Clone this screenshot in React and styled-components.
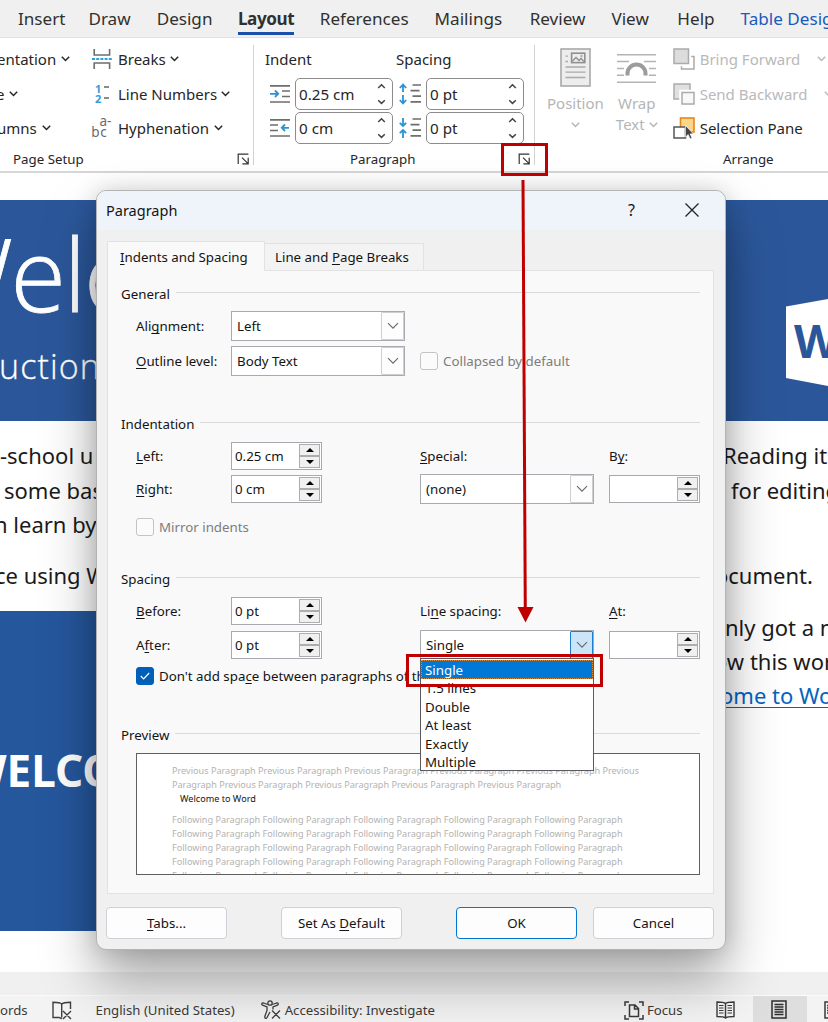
import React from "react";
import styled, { createGlobalStyle } from "styled-components";

const Global = createGlobalStyle`
  * { box-sizing: border-box; }
  body { margin: 0; overflow: hidden; }
  u { text-decoration: underline; text-decoration-thickness: 1px; text-underline-offset: 2px; text-decoration-skip-ink: none; }
`;

const Window = styled.div`
  position: relative;
  display: flex;
  flex-direction: column;
  width: 828px;
  height: 1022px;
  overflow: hidden;
  background: #fff;
  color: #262626;
  font-family: "Noto Sans", "Open Sans", sans-serif;
  font-size: 13.3px;
  white-space: nowrap;
`;

/* ---------- ribbon ---------- */
const TabBar = styled.nav`
  display: flex;
  height: 38px;
  flex: none;
  background: #f0f0f0;
  border-bottom: 1px solid #e2e2e2;
`;
const RibbonTab = styled.span`
  flex: none;
  height: 35px;
  margin-left: ${(p) => p.$gap}px;
  line-height: 37px;
  font-size: 17.1px;
  color: ${(p) => (p.$contextual ? "#185abd" : "#303030")};
  font-weight: ${(p) => (p.$active ? 700 : 400)};
  letter-spacing: ${(p) => (p.$active ? "-0.4px" : "0")};
  border-bottom: ${(p) => (p.$active ? "3px solid #1a50ab" : "none")};
`;
const Ribbon = styled.section`
  display: flex;
  flex: none;
  height: 135px;
  padding-top: 4px;
  background: #fff;
  border-bottom: 2px solid #d6d6d6;
`;
const Group = styled.div`
  position: relative;
  display: flex;
  flex-direction: column;
  flex: none;
  width: ${(p) => p.$w}px;
  &::after {
    content: "";
    position: absolute;
    right: 0;
    top: 3px;
    width: 1px;
    height: 120px;
    background: ${(p) => (p.$last ? "transparent" : "#d2d2d2")};
  }
`;
const GroupBody = styled.div`
  display: flex;
  height: 104px;
`;
const GroupFooter = styled.div`
  display: flex;
  align-items: center;
  justify-content: space-between;
  height: 25px;
  padding: 0 4px 0 ${(p) => p.$pad}px;
`;
const Column = styled.div`
  flex: none;
  width: ${(p) => p.$w}px;
  margin-left: ${(p) => p.$ml || 0}px;
`;
const Command = styled.div`
  display: flex;
  align-items: center;
  height: 34.6px;
  font-size: 15px;
  margin-left: ${(p) => p.$shift || 0}px;
  color: ${(p) => (p.$disabled ? "#b9b9b9" : "#262626")};
  & > svg:first-child { flex: none; margin-right: 5px; }
`;
const Arrow = styled.svg`
  flex: none;
  margin-left: ${(p) => p.$gap ?? 5}px;
`;
const Caret = ({ gap }) => (
  <Arrow $gap={gap} width="9" height="6" viewBox="0 0 9 6" fill="none" stroke="currentColor" strokeWidth="1.5">
    <path d="M.8 .8 4.5 4.5 8.2 .8" />
  </Arrow>
);
const FieldRow = styled.div`
  display: flex;
  align-items: center;
  height: 34.6px;
  font-size: 15px;
  & > svg { flex: none; }
`;
const FieldHead = styled.span`
  width: ${(p) => p.$w}px;
`;
const RibbonInput = styled.div`
  display: flex;
  align-items: center;
  justify-content: space-between;
  width: 98px;
  height: 32px;
  padding: 0 6px 0 3px;
  margin: 0 ${(p) => p.$mr || 0}px 0 5px;
  border: 1px solid #8c8c8c;
  border-radius: 5px;
  background: #fff;
  font-size: 15.2px;
`;
const UpDown = () => (
  <svg width="9" height="22" viewBox="0 0 9 22" fill="none" stroke="#444" strokeWidth="1.5">
    <path d="M1.2 5 4.5 1.8 7.8 5M1.2 17.2 4.5 20.4 7.8 17.2" />
  </svg>
);
const Launcher = () => (
  <svg width="13" height="12" viewBox="0 0 13 12" fill="none" stroke="#333" strokeWidth="1.2">
    <path d="M1.2 11V1.2H11.4M5 4.6 10.6 10.2M11.2 4.8V10.8H5.4" />
  </svg>
);
const BigCommand = styled.div`
  display: flex;
  flex-direction: column;
  align-items: center;
  width: ${(p) => p.$w}px;
  margin-left: ${(p) => p.$ml}px;
  padding-top: 6px;
  font-size: 15px;
  line-height: 21px;
  color: #b5b5b5;
  & > svg:first-child { margin-bottom: 6px; flex: none; }
`;
const BigLine = styled.div`
  display: flex;
  align-items: center;
  height: 21px;
`;

const BreaksIcon = () => (
  <svg width="22" height="22" viewBox="0 0 22 22" fill="none" stroke="#6e6e6e" strokeWidth="1.6">
    <path d="M3.2 1V7H18.6V1M3.2 21V15H18.6V21" />
    <path d="M1 11H21" stroke="#2e9fe0" strokeWidth="1.8" strokeDasharray="3 1.2" />
  </svg>
);
const NumberMark = styled.text`
  font: 700 11px "Noto Sans", sans-serif;
  fill: #3a9bdc;
`;
const HyphenMark = styled.text`
  font: 13.5px "Noto Sans", sans-serif;
  fill: #6a6a6a;
`;
const LineNumbersIcon = () => (
  <svg width="22" height="22" viewBox="0 0 22 22">
    <NumberMark x="4" y="9.5">1</NumberMark>
    <NumberMark x="4" y="20">2</NumberMark>
    <path d="M13 4H18M13 15H18" stroke="#666" strokeWidth="1.4" />
  </svg>
);
const HyphenIcon = () => (
  <svg width="22" height="24" viewBox="0 0 22 24">
    <HyphenMark x="8.5" y="10">a-</HyphenMark>
    <HyphenMark x="0.2" y="21" letterSpacing=".8">bc</HyphenMark>
  </svg>
);
const IndentIcon = ({ right }) => (
  <svg width="20" height="20" viewBox="0 0 20 20" fill="none" stroke="#6e6e6e" strokeWidth="1.7">
    <path d={right ? "M0 1.8H20M0 7H8M0 12.5H8M0 18H20" : "M0 1.8H20M12 7H20M12 12.5H20M0 18H20"} />
    <path d={right ? "M19 9.8H12M15 6.5 11.8 9.8 15 13" : "M0 9.8H8M5 6.5 8.2 9.8 5 13"} stroke="#2a93d4" strokeWidth="1.8" />
  </svg>
);
const SpacingIcon = ({ after }) => (
  <svg width="22" height="22" viewBox="0 0 22 22" fill="none" stroke="#6e6e6e" strokeWidth="1.7">
    <path d="M13.5 2H22M11.5 7.6H20.5M13.5 13.2H22M11.5 18.8H22" />
    <path
      d={after ? "M4 1V9M.8 5.8 4 9 7.2 5.8M4 21V13M.8 16.2 4 13 7.2 16.2" : "M4 9V1.6M.8 5 4 1.6 7.2 5M4 12V20.4M.8 17 4 20.4 7.2 17"}
      stroke="#2a93d4"
      strokeWidth="1.8"
    />
  </svg>
);
const PositionIcon = () => (
  <svg width="31" height="39" viewBox="0 0 31 39" fill="#ededed" stroke="#a9a9a9" strokeWidth="1.6">
    <rect x="1" y="1" width="29" height="37" />
    <path d="M5.5 8.2H8M5.5 13.5H8M5.5 19H25.5M5.5 24.2H25.5M5.5 29.5H25.5" strokeWidth="1.3" />
    <rect x="11.6" y="5.2" width="13.2" height="9.4" stroke="#8f8f8f" />
    <path d="M12.5 13 16 9.5 19 12.5 21 10.5 24 13.5" fill="none" stroke="#8f8f8f" strokeWidth="1.3" />
    <circle cx="21.5" cy="8" r=".8" stroke="#8f8f8f" strokeWidth=".8" />
  </svg>
);
const WrapIcon = () => (
  <svg width="39" height="39" viewBox="0 -5 39 39" fill="none" stroke="#b4b4b4" strokeWidth="1.4">
    <path d="M0 1.7H39M0 8.5H12M27 8.5H39M0 15.5H7M32 15.5H39M0 22.3H7M32 22.3H39M0 29.2H39" />
    <path d="M10.5 22.5V20.5a9 9 0 0 1 18 0V22.5" stroke="#9c9c9c" strokeWidth="4" />
  </svg>
);
const ForwardIcon = () => (
  <svg width="22" height="22" viewBox="0 0 22 22" stroke="#ababab" strokeWidth="1.5">
    <path d="M8.5 21H21V8.5H8.5Z" fill="#fff" />
    <rect x="6.5" y="6.5" width="11" height="11" fill="#fff" stroke="#fff" />
    <rect x="1" y="1" width="14.5" height="14.5" fill="#dcdcdc" />
  </svg>
);
const BackwardIcon = () => (
  <svg width="22" height="22" viewBox="0 0 22 22" stroke="#ababab" strokeWidth="1.5">
    <rect x="1" y="1" width="16" height="15" fill="#e0e0e0" />
    <rect x="7" y="7.5" width="15" height="15" fill="#fff" stroke="#fff" />
    <rect x="9" y="9.5" width="12" height="11.5" fill="#f8f8f8" />
  </svg>
);
const SelectionIcon = () => (
  <svg width="22" height="23" viewBox="0 0 22 23">
    <rect x="7.5" y="1" width="13.5" height="14" fill="#fbd58a" stroke="#e8861e" strokeWidth="1.6" />
    <rect x="1" y="10" width="11.5" height="11" fill="#fff" stroke="#555" strokeWidth="1.5" />
    <path d="M12.5 8.5V20L15.2 17.6 17 22 19 21 17.2 16.9H20.5Z" fill="#444" stroke="#fff" strokeWidth=".7" />
  </svg>
);

/* ---------- document ---------- */
const Doc = styled.main`
  flex: none;
  height: 799px;
  padding-top: 27px;
  overflow: hidden;
  color: #1b1b1b;
`;
const Banner = styled.header`
  display: flex;
  justify-content: space-between;
  height: 221px;
  background: #2b579a;
  color: #fff;
  overflow: hidden;
`;
const BannerTitle = styled.div`
  height: 138px;
  margin-left: -77px;
  font: 300 101px/146px "Open Sans", "Noto Sans", sans-serif;
  letter-spacing: -2.5px;
  -webkit-text-stroke: 0.8px #fff;
`;
const BannerSub = styled.div`
  margin-left: -1px;
  font: 300 34px/57px "Open Sans", "Noto Sans", sans-serif;
  letter-spacing: 1.1px;
  -webkit-text-stroke: 0.3px #fff;
`;
const WordMark = styled.svg`
  flex: none;
  margin-top: 98px;
`;
const WordLetter = styled.text`
  font: 700 46px "Noto Sans", sans-serif;
  fill: #2b579a;
`;
const Prose = styled.div`
  height: 190px;
  padding-top: 17px;
  font-size: 22px;
`;
const ProseLine = styled.div`
  display: flex;
  height: 34.5px;
  line-height: 34.5px;
  margin-top: ${(p) => (p.$para ? 16 : 0)}px;
`;
const Chunk = styled.span`
  flex: none;
  width: ${(p) => p.$w}px;
  overflow: hidden;
  text-indent: ${(p) => p.$x || 0}px;
`;
const Split = styled.div`
  display: flex;
  height: 320px;
`;
const VideoPanel = styled.div`
  flex: none;
  width: 600px;
  padding-top: 128px;
  background: #25579d;
  color: #fff;
  overflow: hidden;
  font-size: 44px;
  font-weight: 700;
  line-height: 63px;
  text-indent: -36px;
`;
const SideText = styled.div`
  flex: none;
  width: 228px;
  padding-left: 125px;
  font-size: 22px;
  line-height: 34.2px;
`;
const SideLine = styled.div`
  height: 34.2px;
  margin-top: ${(p) => p.$mt || 0}px;
  text-indent: ${(p) => p.$x}px;
`;
const Link = styled.span`
  color: #0563c1;
  text-decoration: underline;
  text-decoration-thickness: 1px;
  text-underline-offset: 3px;
`;
const ScrollTrack = styled.div`
  flex: none;
  height: 24px;
  background: #f0f0f0;
  border-bottom: 1px solid #fbfbfb;
`;
const StatusBar = styled.footer`
  display: flex;
  align-items: center;
  flex: none;
  height: 26px;
  padding-top: 2px;
  background: #f3f3f3;
  color: #3a3a3a;
  font-size: 13.2px;
  & svg { flex: none; }
`;
const StatusItem = styled.span`
  display: flex;
  align-items: center;
  flex: none;
  gap: ${(p) => p.$gap || 0}px;
  margin-left: ${(p) => p.$ml || 0}px;
`;
const ViewButton = styled.span`
  display: flex;
  align-items: center;
  justify-content: center;
  flex: none;
  width: 54px;
  height: 26px;
  margin: -2px 0 0 18px;
  padding-right: 2px;
  background: #dedede;
`;

/* ---------- dialog ---------- */
const Dialog = styled.section`
  position: absolute;
  z-index: 1;
  left: 96px;
  top: 190px;
  width: 630px;
  height: 760px;
  border: 1px solid #b4b4b4;
  border-radius: 10px;
  background: #f0f0f0;
  color: #141414;
  box-shadow: 0 30px 54px rgba(0, 0, 0, 0.34), 0 0 22px rgba(0, 0, 0, 0.15);
`;
const TitleBar = styled.div`
  display: flex;
  align-items: center;
  height: 39px;
  padding: 0 26px 1px 9px;
  border-radius: 9px 9px 0 0;
  background: #eff4fa;
  font-size: 14.5px;
`;
const HelpMark = styled.span`
  margin: 0 50px 0 auto;
  font-size: 16px;
`;
const TabStrip = styled.div`
  display: flex;
  align-items: flex-end;
  height: 40px;
  padding: 11px 0 0 10px;
`;
const DialogTab = styled.div`
  width: ${(p) => (p.$active ? 158 : 159)}px;
  height: ${(p) => (p.$active ? 30 : 27)}px;
  margin-bottom: ${(p) => (p.$active ? -1 : 0)}px;
  padding-left: ${(p) => (p.$active ? 12 : 10)}px;
  line-height: ${(p) => (p.$active ? 30 : 27)}px;
  border: 1px solid #e2e2e2;
  border-bottom: none;
  border-left-width: ${(p) => (p.$active ? 1 : 0)}px;
  background: ${(p) => (p.$active ? "#f9f9f9" : "#f3f3f3")};
`;
const Panel = styled.div`
  width: 607px;
  height: 624px;
  margin-left: 10px;
  padding: 13px 13px 0 13px;
  border: 1px solid #e2e2e2;
  background: #f9f9f9;
`;
const Heading = styled.div`
  display: flex;
  align-items: center;
  gap: 6px;
  height: 20px;
  margin-top: ${(p) => p.$mt || 0}px;
  &::after {
    content: "";
    flex: 1;
    height: 1px;
    margin-top: -3px;
    background: #dadada;
  }
`;
const FormRow = styled.div`
  position: relative;
  display: grid;
  grid-template-columns: 95px 189px 189px 91px;
  align-items: center;
  height: ${(p) => p.$h}px;
  margin: ${(p) => p.$mt || 0}px 0 0 15px;
`;
const Combo = styled.div`
  display: flex;
  align-items: center;
  justify-content: space-between;
  width: 174px;
  height: 30px;
  padding-left: 5px;
  border: 1px solid #a9a9b0;
  background: #fff;
`;
const ComboButton = styled.span`
  display: flex;
  align-items: center;
  justify-content: center;
  width: 23px;
  height: 28px;
  border: 1px solid ${(p) => (p.$open ? "#1a7fd0" : "#cfcfcf")};
  border-radius: 1px;
  background: ${(p) => (p.$open ? "#cce4f7" : "#fdfdfd")};
`;
const SpinBox = styled.div`
  display: flex;
  justify-content: space-between;
  width: 91px;
  height: 28px;
  padding: 1px 1px 1px 3px;
  border: 1px solid #a9a9b0;
  background: #fff;
  line-height: 24px;
`;
const SpinButtons = styled.span`
  display: flex;
  flex-direction: column;
  width: 21px;
`;
const SpinButton = styled.span`
  display: flex;
  align-items: center;
  justify-content: center;
  flex: 1;
  border: 1px solid #adadad;
  background: #f0f0f0;
`;
const CheckRow = styled.div`
  display: flex;
  align-items: center;
  gap: 5px;
  height: 20px;
  margin: ${(p) => p.$mt || 0}px 0 0 ${(p) => p.$ml ?? 15}px;
  color: ${(p) => (p.$disabled ? "#7d7d7d" : "inherit")};
`;
const CheckBox = styled.span`
  display: flex;
  align-items: center;
  justify-content: center;
  flex: none;
  width: 18px;
  height: 18px;
  border: 1px solid ${(p) => (p.$on ? "#005fb8" : "#c4c4c4")};
  border-radius: 3px;
  background: ${(p) => (p.$on ? "#005fb8" : "#fbfbfb")};
`;
const ListBox = styled.ul`
  position: absolute;
  left: 284px;
  top: 28px;
  z-index: 2;
  width: 174px;
  height: 113px;
  margin: 0;
  padding: 1px 0 0;
  list-style: none;
  border: 1px solid #5a5a60;
  background: #fff;
`;
const Option = styled.li`
  height: ${(p) => (p.$on ? 19.4 : 18.4)}px;
  padding-left: 4px;
  line-height: ${(p) => (p.$on ? 20 : 18.4)}px;
  color: ${(p) => (p.$on ? "#fff" : "#141414")};
  background: ${(p) => (p.$on ? "#0078d7" : "transparent")};
  outline: ${(p) => (p.$on ? "1px dotted #d98a3a" : "none")};
  outline-offset: -1px;
`;
const Preview = styled.div`
  width: 564px;
  height: 122px;
  margin: 8px 0 0 15px;
  padding: 10px 0 0 35px;
  overflow: hidden;
  border: 1px solid #5f5f5f;
  background: #fff;
  color: #b2b2b2;
  font-size: 9.12px;
  line-height: 14.1px;
`;
const PreviewSample = styled.div`
  margin: 0 0 6.5px 8px;
  color: #141414;
`;
const Buttons = styled.div`
  display: flex;
  padding: 13px 0 0 9px;
`;
const Button = styled.button`
  width: 121px;
  height: 32px;
  margin: 0 ${(p) => p.$mr || 0}px 0 0;
  padding: 0;
  border: 1px solid ${(p) => (p.$primary ? "#0078d4" : "#cdd0d4")};
  border-radius: 4px;
  background: #fdfdfd;
  color: #141414;
  font: inherit;
`;
const Down = () => (
  <svg width="12" height="8" viewBox="0 0 12 8" fill="none" stroke="#6a6a6a" strokeWidth="1.2">
    <path d="M1 1.2 6 6.2 11 1.2" />
  </svg>
);
const Select = ({ value, open }) => (
  <Combo>
    <span>{value}</span>
    <ComboButton $open={open}><Down /></ComboButton>
  </Combo>
);
const Spin = ({ value }) => (
  <SpinBox>
    <span>{value}</span>
    <SpinButtons>
      <SpinButton><svg width="8" height="4" viewBox="0 0 8 4"><path d="M0 4 4 0 8 4Z" /></svg></SpinButton>
      <SpinButton><svg width="8" height="4" viewBox="0 0 8 4"><path d="M0 0 4 4 8 0Z" /></svg></SpinButton>
    </SpinButtons>
  </SpinBox>
);

/* ---------- callouts ---------- */
const Callout = styled.div`
  position: absolute;
  z-index: 2;
  left: ${(p) => p.$x}px;
  top: ${(p) => p.$y}px;
  width: ${(p) => p.$w}px;
  height: ${(p) => p.$h}px;
  border: 3px solid #c00000;
`;
const CalloutArrow = styled.svg`
  position: absolute;
  z-index: 2;
  left: 515px;
  top: 180px;
`;

const tabs = [
  { name: "Insert", gap: 18 },
  { name: "Draw", gap: 23 },
  { name: "Design", gap: 26 },
  { name: "Layout", gap: 25.5, active: true },
  { name: "References", gap: 25.5 },
  { name: "Mailings", gap: 26 },
  { name: "Review", gap: 27.5 },
  { name: "View", gap: 26 },
  { name: "Help", gap: 28.5 },
  { name: "Table Design", gap: 26, contextual: true },
];
const spacingOptions = ["Single", "1.5 lines", "Double", "At least", "Exactly", "Multiple"];
const repeat = (s, n) => Array(n).fill(s).join(" ");

function ParagraphDialog() {
  return (
    <Dialog>
      <TitleBar>
        Paragraph
        <HelpMark>?</HelpMark>
        <svg width="14" height="14" viewBox="0 0 14 14" stroke="#222" strokeWidth="1.3"><path d="M.5 .5 13.5 13.5M13.5 .5 .5 13.5" /></svg>
      </TitleBar>
      <TabStrip>
        <DialogTab $active><u>I</u>ndents and Spacing</DialogTab>
        <DialogTab>Line and <u>P</u>age Breaks</DialogTab>
      </TabStrip>
      <Panel>
        <Heading>General</Heading>
        <FormRow $h={30} $mt={7}>
          <span>Ali<u>g</u>nment:</span>
          <Select value="Left" />
        </FormRow>
        <FormRow $h={30} $mt={5}>
          <span><u>O</u>utline level:</span>
          <Select value="Body Text" />
          <CheckRow $disabled $ml={0}><CheckBox />Collapsed by default</CheckRow>
        </FormRow>
        <Heading $mt={38}>Indentation</Heading>
        <FormRow $h={28} $mt={8}>
          <span><u>L</u>eft:</span>
          <Spin value="0.25 cm" />
          <span><u>S</u>pecial:</span>
          <span>B<u>y</u>:</span>
        </FormRow>
        <FormRow $h={30} $mt={4}>
          <span><u>R</u>ight:</span>
          <Spin value="0 cm" />
          <Select value="(none)" />
          <Spin />
        </FormRow>
        <CheckRow $disabled $mt={13}><CheckBox />Mirror indents</CheckRow>
        <Heading $mt={32}>Spacing</Heading>
        <FormRow $h={28} $mt={8}>
          <span><u>B</u>efore:</span>
          <Spin value="0 pt" />
          <span>Li<u>n</u>e spacing:</span>
          <span><u>A</u>t:</span>
        </FormRow>
        <FormRow $h={30} $mt={5}>
          <span>A<u>f</u>ter:</span>
          <Spin value="0 pt" />
          <Select value="Single" open />
          <Spin />
          <ListBox>
            {spacingOptions.map((o, i) => <Option key={o} $on={i === 0}>{o}</Option>)}
          </ListBox>
        </FormRow>
        <CheckRow $mt={6}>
          <CheckBox $on>
            <svg width="10" height="8" viewBox="0 0 10 8" fill="none" stroke="#fff" strokeWidth="1.2"><path d="M.8 4 3.6 6.8 9.2 1" /></svg>
          </CheckBox>
          <span>Don't add spa<u>c</u>e between paragraphs of the same style</span>
        </CheckRow>
        <Heading $mt={39}>Preview</Heading>
        <Preview>
          <div>{repeat("Previous Paragraph", 5)} Previous</div>
          <div>Paragraph {repeat("Previous Paragraph", 4)}</div>
          <PreviewSample>Welcome to Word</PreviewSample>
          {[0, 1, 2, 3, 4].map((i) => <div key={i}>{repeat("Following Paragraph", 5)}</div>)}
        </Preview>
      </Panel>
      <Buttons>
        <Button $mr={54}><u>T</u>abs...</Button>
        <Button $mr={54}>Set As <u>D</u>efault</Button>
        <Button $mr={16} $primary>OK</Button>
        <Button>Cancel</Button>
      </Buttons>
    </Dialog>
  );
}

export default function App() {
  return (
    <Window>
      <Global />
      <TabBar>
        {tabs.map((t) => (
          <RibbonTab key={t.name} $gap={t.gap} $active={t.active} $contextual={t.contextual}>{t.name}</RibbonTab>
        ))}
      </TabBar>
      <Ribbon>
        <Group $w={254}>
          <GroupBody>
            <Column $w={91}>
              <Command $shift={-3}>entation<Caret /></Command>
              <Command $shift={-4}>e<Caret /></Command>
              <Command $shift={-3}>umns<Caret /></Command>
            </Column>
            <Column $w={160}>
              <Command><BreaksIcon />Breaks<Caret gap={4} /></Command>
              <Command><LineNumbersIcon />Line Numbers<Caret gap={4} /></Command>
              <Command><HyphenIcon />Hyphenation<Caret /></Command>
            </Column>
          </GroupBody>
          <GroupFooter $pad={13}>Page Setup<Launcher /></GroupFooter>
        </Group>
        <Group $w={281}>
          <GroupBody>
            <Column $w={270} $ml={11}>
              <FieldRow><FieldHead $w={131}>Indent</FieldHead><FieldHead>Spacing</FieldHead></FieldRow>
              <Column $ml={5}>
                <FieldRow>
                  <IndentIcon />
                  <RibbonInput $mr={6}>0.25 cm<UpDown /></RibbonInput>
                  <SpacingIcon />
                  <RibbonInput>0 pt<UpDown /></RibbonInput>
                </FieldRow>
                <FieldRow>
                  <IndentIcon right />
                  <RibbonInput $mr={6}>0 cm<UpDown /></RibbonInput>
                  <SpacingIcon after />
                  <RibbonInput>0 pt<UpDown /></RibbonInput>
                </FieldRow>
              </Column>
            </Column>
          </GroupBody>
          <GroupFooter $pad={96}>Paragraph<Launcher /></GroupFooter>
        </Group>
        <Group $w={300} $last>
          <GroupBody>
            <BigCommand $w={58} $ml={12}>
              <PositionIcon />
              <BigLine>Position</BigLine>
              <BigLine><Caret gap={0} /></BigLine>
            </BigCommand>
            <BigCommand $w={44} $ml={12}>
              <WrapIcon />
              <BigLine>Wrap</BigLine>
              <BigLine>Text<Caret gap={4} /></BigLine>
            </BigCommand>
            <Column $w={167} $ml={15}>
              <Command $disabled><ForwardIcon />Bring Forward<Caret gap={17} /></Command>
              <Command $disabled><BackwardIcon />Send Backward<Caret gap={17} /></Command>
              <Command><SelectionIcon />Selection Pane</Command>
            </Column>
          </GroupBody>
          <GroupFooter $pad={188}>Arrange</GroupFooter>
        </Group>
      </Ribbon>
      <Doc>
        <Banner>
          <div>
            <BannerTitle>Welc</BannerTitle>
            <BannerSub>uction</BannerSub>
          </div>
          <WordMark width="42" height="90" viewBox="0 0 42 90">
            <path d="M0 8.5 42 1V88L0 80Z" fill="#fff" />
            <WordLetter x="8" y="60">W</WordLetter>
          </WordMark>
        </Banner>
        <Prose>
          <ProseLine><Chunk $w={725}>-school u</Chunk><Chunk $w={110} $x={-2}>Reading it</Chunk></ProseLine>
          <ProseLine><Chunk $w={725} $x={4}>some bas</Chunk><Chunk $w={110} $x={6}>for editing</Chunk></ProseLine>
          <ProseLine><Chunk $w={725} $x={-6}>n learn by</Chunk></ProseLine>
          <ProseLine $para><Chunk $w={725} $x={-5}>ce using W</Chunk><Chunk $w={110} $x={-10}>ocument.</Chunk></ProseLine>
        </Prose>
        <Split>
          <VideoPanel>WELCO</VideoPanel>
          <SideText>
            <SideLine $x={0} $mt={-1}>nly got a n</SideLine>
            <SideLine $x={-11}>ow this wor</SideLine>
            <SideLine $x={-5}><Link>ome to Wor</Link></SideLine>
          </SideText>
        </Split>
      </Doc>
      <ScrollTrack />
      <StatusBar>
        <StatusItem>ords</StatusItem>
        <StatusItem $ml={24}>
          <svg width="20" height="19" viewBox="0 0 20 19" fill="none" stroke="#3f3f3f" strokeWidth="1.4">
            <path d="M9.7 3V16.5M9.7 3C8.5 1.5 7 1.2 1 1.2V16.5H6.5C8 16.5 9 17 9.7 18M9.7 3C11 1.5 12.5 1.2 18.5 1.2V8M11 10 19 18M19 10 11 18" />
          </svg>
        </StatusItem>
        <StatusItem $ml={24}>English (United States)</StatusItem>
        <StatusItem $ml={26} $gap={4}>
          <svg width="20" height="20" viewBox="0 0 20 20" fill="none" stroke="#3f3f3f" strokeWidth="1.3">
            <circle cx="9" cy="3" r="2.2" />
            <path d="M6.7 4.5 2.5 3C.6 2.5.3 4.6 1.6 5.2L6 7V10.5L3.8 16.5C3.5 18.5 5.3 19 6 17.5L9 12M11.3 4.5 15.5 3C17.4 2.5 17.7 4.6 16.4 5.2L12 7V9.5M11 10.5 19 18.5M19 10.5 11 18.5" />
          </svg>
          Accessibility: Investigate
        </StatusItem>
        <StatusItem $ml={189} $gap={3}>
          <svg width="20" height="19" viewBox="0 0 20 19" fill="none" stroke="#3a3a3a" strokeWidth="1.5">
            <path d="M5 1H1V5M15 1H19V5M1 14V18H5M19 14V18H15" />
            <path d="M5.5 4H11L14.5 7.5V15.5H5.5ZM10.5 4V8H14.5" />
          </svg>
          Focus
        </StatusItem>
        <StatusItem $ml={33}>
          <svg width="19" height="18" viewBox="0 0 19 18" fill="none" stroke="#3a3a3a" strokeWidth="1.4">
            <path d="M9.5 2.5V17M9.5 2.5C8 1 6 1 1 1V15.5C6 15.5 8 15.5 9.5 17C11 15.5 13 15.5 18 15.5V1C13 1 11 1 9.5 2.5" />
            <path d="M3 4.5H7.5M3 7H7.5M3 9.5H7.5M3 12H7.5M11.5 4.5H16M11.5 7H16M11.5 9.5H16M11.5 12H16" strokeWidth="1.2" />
          </svg>
        </StatusItem>
        <ViewButton>
          <svg width="16" height="19" viewBox="0 0 16 19" fill="none" stroke="#2d2d2d" strokeWidth="1.5">
            <rect x="1" y="1" width="14" height="17" />
            <path d="M3.5 4.5H12.5M3.5 7H12.5M3.5 9.5H12.5M3.5 12H12.5M3.5 14.5H12.5" strokeWidth="1.3" />
          </svg>
        </ViewButton>
        <StatusItem $ml={17}>
          <svg width="16" height="18" viewBox="0 0 16 18" fill="none" stroke="#3a3a3a" strokeWidth="1.5">
            <path d="M1 1H15V17H1ZM3 4.5H12M3 7H12M3 9.5H12M3 12H12" />
          </svg>
        </StatusItem>
      </StatusBar>
      <ParagraphDialog />
      <Callout $x={501} $y={143} $w={47} $h={33} />
      <Callout $x={406} $y={654} $w={197} $h={33} />
      <CalloutArrow width="20" height="444" viewBox="0 0 20 444">
        <path d="M8 0 10.3 430" stroke="#c00000" strokeWidth="3" />
        <path d="M2.5 427H18.5L10.5 442.5Z" fill="#c00000" />
      </CalloutArrow>
    </Window>
  );
}
